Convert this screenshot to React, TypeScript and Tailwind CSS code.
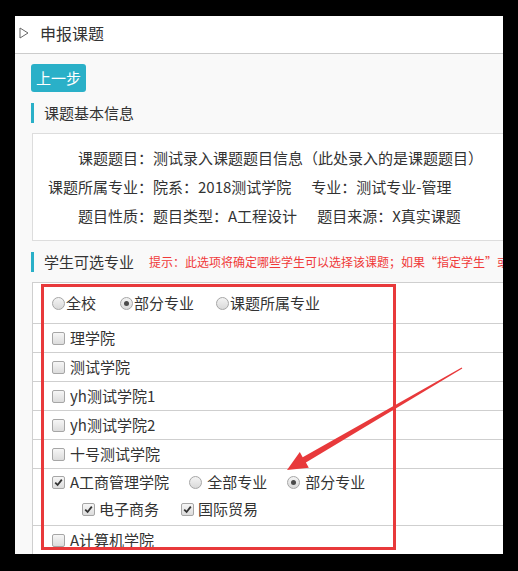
import React from "react";

const font = { fontFamily: '"Noto Sans CJK SC", "Noto Sans", sans-serif' };

function Radio({ checked = false }: { checked?: boolean }) {
  return (
    <span className="inline-flex items-center justify-center w-[13px] h-[13px] rounded-full border border-[#a6a6a6] bg-gradient-to-b from-[#f4f4f4] to-[#d9d9d9] shrink-0">
      {checked && <span className="w-[5px] h-[5px] rounded-full bg-[#4a4a4a]" />}
    </span>
  );
}

function Check({ checked = false }: { checked?: boolean }) {
  return (
    <span className="inline-flex items-center justify-center w-[13px] h-[13px] rounded-[2px] border border-[#a6a6a6] bg-gradient-to-b from-[#f6f6f6] to-[#dcdcdc] shrink-0">
      {checked && (
        <svg width="9" height="9" viewBox="0 0 9 9">
          <path d="M1.2 4.6 L3.6 7 L7.8 1.6" fill="none" stroke="#333" strokeWidth="1.8" />
        </svg>
      )}
    </span>
  );
}

function SectionTitle({ children, hint }: { children: React.ReactNode; hint?: string }) {
  return (
    <div className="flex items-center h-[20px] whitespace-nowrap">
      <span className="w-[3px] h-[20px] bg-[#2ab0c8] shrink-0" />
      <span className="ml-[10px] text-[15px] leading-[20px] text-[#333] shrink-0">{children}</span>
      {hint && <span className="ml-[15px] text-[12px] leading-[20px] text-[#f03a3a]">{hint}</span>}
    </div>
  );
}

function InfoRow({ label, children }: { label: string; children: React.ReactNode }) {
  return (
    <div className="flex items-center h-[29px] text-[15px] text-[#333] whitespace-nowrap">
      <span className="w-[120px] text-right">{label}</span>
      <span>{children}</span>
    </div>
  );
}

function CheckRow({ label }: { label: string }) {
  return (
    <div className="flex items-center h-[29px] border-b border-[#cfcfcf] pl-[19px] text-[15px] text-[#333]">
      <Check />
      <span className="ml-[5px]">{label}</span>
    </div>
  );
}

export default function App() {
  return (
    <div className="relative w-[518px] h-[571px] bg-black pt-[16px] pl-[15px] overflow-hidden" style={font}>
      <div className="w-[488px] h-[538px] bg-white overflow-hidden flex flex-col">
        <div className="h-[38px] shrink-0 border-b border-[#cccccc] flex items-center pb-[4px]">
          <svg className="ml-[4px]" width="10" height="12" viewBox="0 0 10 12">
            <path d="M1 1 L9 6 L1 11 Z" fill="none" stroke="#666" strokeWidth="1" />
          </svg>
          <span className="ml-[11px] text-[16px] text-[#333]">申报课题</span>
        </div>
        <div className="flex-1 bg-[#f9f9f9] pl-[16px]">
          <button className="mt-[10px] w-[55px] h-[28px] rounded-[3px] bg-[#2ab0c8] text-white text-[15px] leading-[28px]">
            上一步
          </button>
          <div className="mt-[11px]">
            <SectionTitle>课题基本信息</SectionTitle>
          </div>
          <div className="mt-[10px] ml-[1px] w-[560px] border border-[#dddddd] bg-white pt-[10px] pb-[9px]">
            <InfoRow label="课题题目：">测试录入课题题目信息（此处录入的是课题题目）</InfoRow>
            <InfoRow label="课题所属专业：">
              院系：2018测试学院<span className="ml-[20px]">专业：测试专业-管理</span>
            </InfoRow>
            <InfoRow label="题目性质：">
              题目类型：A工程设计<span className="ml-[20px]">题目来源：X真实课题</span>
            </InfoRow>
          </div>
          <div className="mt-[11px]">
            <SectionTitle hint="提示：此选项将确定哪些学生可以选择该课题；如果“指定学生”或“指定专业”为空，则所有学生都可以选择">
              学生可选专业
            </SectionTitle>
          </div>
          <div className="mt-[10px] ml-[1px] w-[560px] border-l border-t border-[#cfcfcf] bg-white">
            <div className="flex items-center h-[41px] border-b border-[#cfcfcf] pl-[19px] text-[15px] text-[#333] whitespace-nowrap">
              <Radio />
              <span className="ml-[1px]">全校</span>
              <span className="ml-[24px] flex items-center">
                <Radio checked />
                <span className="ml-[1px]">部分专业</span>
              </span>
              <span className="ml-[22px] flex items-center">
                <Radio />
                <span className="ml-[1px]">课题所属专业</span>
              </span>
            </div>
            <CheckRow label="理学院" />
            <CheckRow label="测试学院" />
            <CheckRow label="yh测试学院1" />
            <CheckRow label="yh测试学院2" />
            <CheckRow label="十号测试学院" />
            <div className="h-[57px] border-b border-[#cfcfcf] pl-[19px] text-[15px] text-[#333] whitespace-nowrap">
              <div className="flex items-center h-[27px]">
                <Check checked />
                <span className="ml-[5px]">A工商管理学院</span>
                <span className="ml-[20px] flex items-center">
                  <Radio />
                  <span className="ml-[5px]">全部专业</span>
                </span>
                <span className="ml-[20px] flex items-center">
                  <Radio checked />
                  <span className="ml-[5px]">部分专业</span>
                </span>
              </div>
              <div className="flex items-center h-[27px] pl-[30px]">
                <Check checked />
                <span className="ml-[4px]">电子商务</span>
                <span className="ml-[22px] flex items-center">
                  <Check checked />
                  <span className="ml-[4px]">国际贸易</span>
                </span>
              </div>
            </div>
            <CheckRow label="A计算机学院" />
          </div>
        </div>
      </div>
      <div className="absolute left-[41px] top-[284px] w-[355px] h-[266px] border-[3px] border-[#e8393b] pointer-events-none" />
      <svg className="absolute left-0 top-0 pointer-events-none" width="518" height="571" viewBox="0 0 518 571">
        <polygon
          points="462.3,368.4 461.7,367.6 302.7,457.3 299.8,452.1 287,470 308.8,467.7 305.9,462.5"
          fill="#e8393b"
        />
      </svg>
    </div>
  );
}
